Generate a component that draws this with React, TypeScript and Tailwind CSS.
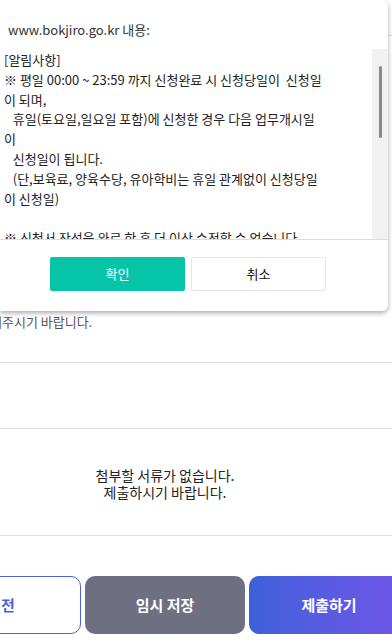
import React from "react";

const noticeLines = [
  "[알림사항]",
  "※ 평일 00:00 ~ 23:59 까지 신청완료 시 신청당일이  신청일",
  "이 되며,",
  "   휴일(토요일,일요일 포함)에 신청한 경우 다음 업무개시일",
  "이",
  "   신청일이 됩니다.",
  "   (단,보육료, 양육수당, 유아학비는 휴일 관계없이 신청당일",
  "이 신청일)",
  " ",
  "※ 신청서 작성을 완료 한 후 더 이상 수정할 수 없습니다.",
];

function AlertDialog(): React.ReactElement {
  return (
    <div className="absolute left-0 top-0 w-[388px] h-[311px] bg-white rounded-r-[6px] shadow-[0_2px_5px_rgba(0,0,0,0.35)] flex flex-col">
      {/* Title */}
      <div className="h-[49px] pt-[20px] pl-[8px] text-[13px] leading-[20px] text-[#333]">
        www.bokjiro.go.kr 내용:
      </div>

      {/* Message + scrollbar */}
      <div className="flex h-[190px]">
        <div className="flex-1 overflow-hidden pl-[4px] pt-[1px] text-[13px] leading-[19.8px] text-[#222]">
          {noticeLines.map((line, i) => (
            <div key={i} className="whitespace-pre">
              {line}
            </div>
          ))}
        </div>
        <div className="w-[16px] bg-[#f1f1f1] flex flex-col">
          <div className="mt-[17px] ml-[7px] w-[3px] h-[72px] rounded-full bg-[#8a8a8a]" />
        </div>
      </div>

      {/* Buttons */}
      <div className="border-t border-[#dcdcdc] flex gap-[6px] pl-[50px] pt-[17px]">
        <button className="w-[135px] h-[34px] rounded-[2px] bg-[#05c4a8] text-white text-[13px]">
          확인
        </button>
        <button className="w-[135px] h-[34px] rounded-[2px] bg-white border border-[#e6e6e6] text-[#111] text-[13px]">
          취소
        </button>
      </div>
    </div>
  );
}

export default function App(): React.ReactElement {
  return (
    <div className="relative w-[392px] h-[644px] overflow-hidden bg-white font-['Noto_Sans_CJK_KR','Noto_Sans',sans-serif]">
      {/* Page behind the dialog (scrolled horizontally) */}
      <div className="flex flex-col w-[488px] -ml-[79px] h-full">
        <div className="h-[312px] flex flex-col">
          <div className="h-[36px] border-b border-[#dedede]" />
        </div>
        <div className="h-[51px] border-b border-[#dedede] pl-[69px] text-[13px] leading-[20px] text-[#555]">
          해주시기 바랍니다.
        </div>
        <div className="h-[66px] border-b border-[#dedede]" />
        <div className="h-[107px] border-b border-[#dedede] flex flex-col items-center justify-center pt-[3px] text-[14px] leading-[17px] text-[#222]">
          <p>첨부할 서류가 없습니다.</p>
          <p>제출하시기 바랍니다.</p>
        </div>

        {/* Bottom action bar */}
        <div className="flex-1 flex gap-[4px] pt-[40px]">
          <button className="w-[160px] h-[58px] rounded-[10px] border border-[#4b63e3] bg-white text-[#4a5fe0] text-[15px] font-bold">
            이전
          </button>
          <button className="w-[160px] h-[58px] rounded-[10px] bg-[#6e7082] text-white text-[15px] font-bold">
            임시 저장
          </button>
          <button className="w-[160px] h-[58px] rounded-[10px] bg-gradient-to-r from-[#3d60da] to-[#7055e8] text-white text-[15px] font-bold">
            제출하기
          </button>
        </div>
      </div>

      <AlertDialog />
    </div>
  );
}
